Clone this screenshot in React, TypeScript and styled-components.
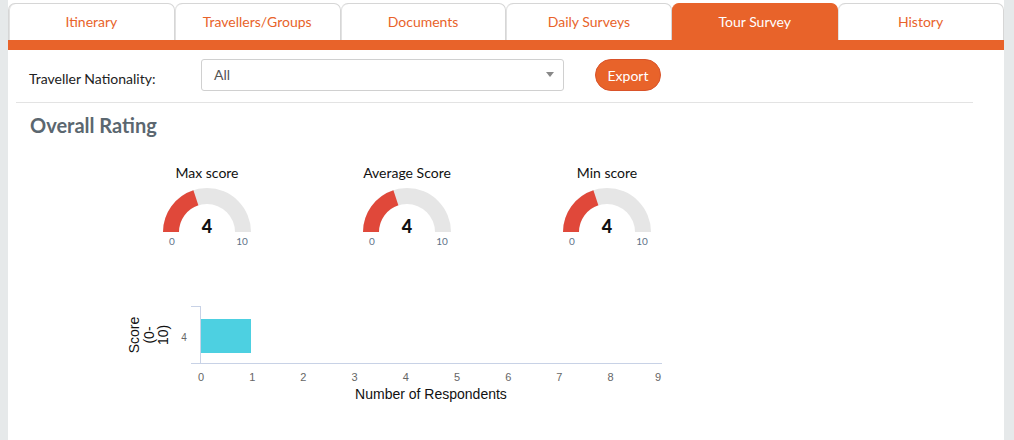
import React from "react";
import styled, { createGlobalStyle } from "styled-components";

const ORANGE = "#e8632a";

const Global = createGlobalStyle`
  html, body { margin: 0; padding: 0; }
  body {
    background: #e6e9ea;
    font-family: Lato, "Open Sans", Arial, sans-serif;
    width: 1014px;
    height: 440px;
    overflow: hidden;
  }
`;

const Page = styled.div`
  margin-left: 8px;
  width: 996px;
  height: 440px;
  background: #ffffff;
  box-sizing: border-box;
  padding-top: 3px;
`;

const TabBar = styled.div`
  display: flex;
  height: 37px;
`;

const Tab = styled.div<{ $active?: boolean; $first?: boolean }>`
  flex: 1 1 0;
  box-sizing: border-box;
  display: flex;
  justify-content: center;
  align-items: center;
  padding-bottom: 1px;
  font-size: 14px;
  color: ${(p) => (p.$active ? "#ffffff" : ORANGE)};
  background: ${(p) => (p.$active ? ORANGE : "#ffffff")};
  border: 1px solid ${(p) => (p.$active ? ORANGE : "#d6d6d6")};
  border-bottom: none;
  border-left: ${(p) => (p.$first ? "1px solid #d6d6d6" : "none")};
  border-radius: 7px 7px 0 0;
  box-shadow: ${(p) => (p.$active ? "none" : "inset 1px 0 0 #e2e2e2")};
`;

const OrangeBar = styled.div`
  height: 10px;
  background: ${ORANGE};
`;

const FilterSection = styled.div`
  margin: 0 31px 0 8px;
`;

const FilterRow = styled.div`
  display: flex;
  align-items: flex-start;
  height: 53px;
  box-sizing: border-box;
  padding: 9px 0 0 13px;
  border-bottom: 1px solid #e3e3e3;
`;

const Label = styled.div`
  width: 172px;
  margin-top: 10px;
  line-height: 20px;
  font-size: 14px;
  color: #222;
`;

const Select = styled.div`
  position: relative;
  width: 363px;
  height: 32px;
  box-sizing: border-box;
  border: 1px solid #d0d0d0;
  border-radius: 3px;
  padding: 0 12px;
  line-height: 29px;
  font-size: 14px;
  color: #555;
`;

const Caret = styled.span`
  position: absolute;
  right: 9px;
  top: 12px;
  width: 0;
  height: 0;
  border-left: 4px solid transparent;
  border-right: 4px solid transparent;
  border-top: 5px solid #888;
`;

const ExportButton = styled.button`
  margin-left: 31px;
  width: 66px;
  height: 32px;
  border: 1px solid #d9532a;
  border-radius: 16px;
  background: ${ORANGE};
  color: #fff;
  font-family: Lato, "Open Sans", Arial, sans-serif;
  font-size: 14px;
  padding: 0;
`;

const Heading = styled.h2`
  margin: 10px 0 0 22px;
  font-size: 20px;
  line-height: 24px;
  font-weight: 700;
  color: #5b6770;
`;

const GaugeRow = styled.div`
  display: flex;
  margin: 27px 0 0 99px;
`;

const GaugeCol = styled.div`
  width: 200px;
  display: flex;
  flex-direction: column;
  align-items: center;
`;

const GaugeTitle = styled.div`
  font-size: 14px;
  line-height: 18px;
  color: #111;
`;

const GaugeSvg = styled.svg`
  display: block;
  margin-top: 6px;
`;

const ChartSvg = styled.svg`
  display: block;
  margin: 51px 0 0 112px;
`;

const tabs = ["Itinerary", "Travellers/Groups", "Documents", "Daily Surveys", "Tour Survey", "History"];

function pt(cx: number, cy: number, r: number, deg: number) {
  const a = (deg * Math.PI) / 180;
  return [cx + r * Math.cos(a), cy - r * Math.sin(a)];
}

function Gauge({ title, value }: { title: string; value: number }) {
  const cx = 50, cy = 44, R = 44, r = 28;
  const ang = 180 - (value / 10) * 180;
  const [ox, oy] = pt(cx, cy, R, ang);
  const [ix, iy] = pt(cx, cy, r, ang);
  return (
    <GaugeCol>
      <GaugeTitle>{title}</GaugeTitle>
      <GaugeSvg width="100" height="60" viewBox="0 0 100 60">
        <path
          d={`M ${cx - R} ${cy} A ${R} ${R} 0 0 1 ${cx + R} ${cy} L ${cx + r} ${cy} A ${r} ${r} 0 0 0 ${cx - r} ${cy} Z`}
          fill="#e6e6e6"
        />
        <path
          d={`M ${cx - R} ${cy} A ${R} ${R} 0 0 1 ${ox} ${oy} L ${ix} ${iy} A ${r} ${r} 0 0 0 ${cx - r} ${cy} Z`}
          fill="#e0483a"
        />
        <text x={cx} y={cy + 0.5} textAnchor="middle" fontFamily="Lato, Arial, sans-serif" fontWeight="900" fontSize="18" fill="#111">
          {value}
        </text>
        <text x={15} y={56.5} textAnchor="middle" fontFamily="Lato, Arial, sans-serif" fontSize="10" fill="#5f7388">0</text>
        <text x={85} y={56.5} textAnchor="middle" fontFamily="Lato, Arial, sans-serif" fontSize="10" fill="#5f7388">10</text>
      </GaugeSvg>
    </GaugeCol>
  );
}

function BarChart() {
  const x0 = 81;
  const step = 51.2;
  const ticks = [0, 1, 2, 3, 4, 5, 6, 7, 8, 9];
  return (
    <ChartSvg width="560" height="108" viewBox="0 0 560 108">
      <g fontFamily="'Liberation Sans', Arial, sans-serif">
        <line x1="71" y1="7.5" x2="80.5" y2="7.5" stroke="#c8d2e6" strokeWidth="1" />
        <line x1="80.5" y1="7" x2="80.5" y2="64" stroke="#c8d2e6" strokeWidth="1" />
        <line x1="71" y1="64.5" x2="542" y2="64.5" stroke="#c8d2e6" strokeWidth="1" />
        <rect x="81" y="20" width="50" height="34" fill="#4dd0e1" />
        <text x="64" y="42" textAnchor="middle" fontSize="10" fill="#666">4</text>
        {ticks.map((t) => (
          <text key={t} x={t === 9 ? 538 : x0 + t * step} y="82" textAnchor="middle" fontSize="11" fill="#666">
            {t}
          </text>
        ))}
        <text x="311" y="100" textAnchor="middle" fontSize="14" fill="#111">Number of Respondents</text>
        <text transform="translate(0 36) rotate(-90)" textAnchor="middle" fontSize="14" fill="#111">
          <tspan x="0" y="19">Score</tspan>
          <tspan x="0" y="33.5">(0-</tspan>
          <tspan x="0" y="48">10)</tspan>
        </text>
      </g>
    </ChartSvg>
  );
}

export default function App() {
  return (
    <>
      <Global />
      <Page>
        <TabBar>
          {tabs.map((t, i) => (
            <Tab key={t} $active={t === "Tour Survey"} $first={i === 0}>
              {t}
            </Tab>
          ))}
        </TabBar>
        <OrangeBar />
        <FilterSection>
          <FilterRow>
            <Label>Traveller Nationality:</Label>
            <Select>
              All
              <Caret />
            </Select>
            <ExportButton>Export</ExportButton>
          </FilterRow>
        </FilterSection>
        <Heading>Overall Rating</Heading>
        <GaugeRow>
          <Gauge title="Max score" value={4} />
          <Gauge title="Average Score" value={4} />
          <Gauge title="Min score" value={4} />
        </GaugeRow>
        <BarChart />
      </Page>
    </>
  );
}
